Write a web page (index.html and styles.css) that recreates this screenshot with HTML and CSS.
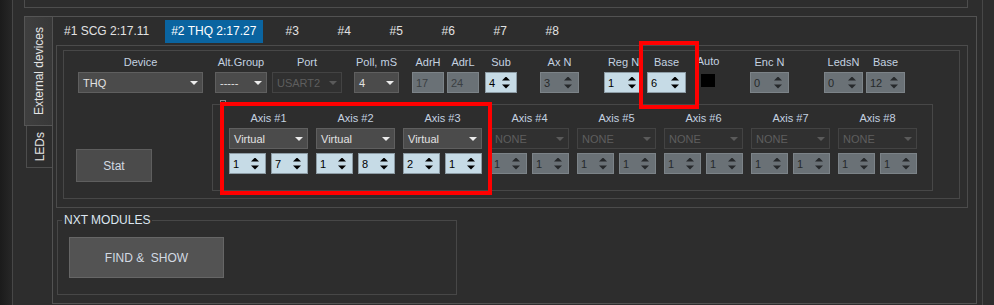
FILE: index.html
```html
<!DOCTYPE html>
<html lang="en">
<head>
    <meta charset="UTF-8">
    <title>External devices</title>
    <link rel="stylesheet" href="styles.css">
</head>
<body>
    <div class="frame">
        <div class="edge"></div>
        <div class="main">
            <div class="prev-box"></div>

            <div class="side-tabs">
                <div class="vtabs">
                    <div class="vtab active"><span>External devices</span></div>
                    <div class="vtab leds"><span>LEDs</span></div>
                </div>

                <div class="pane">
                    <div class="htabs">
                        <div class="htab first">#1 SCG 2:17.11</div>
                        <div class="htab active">#2 THQ 2:17.27</div>
                        <div class="htab num">#3</div>
                        <div class="htab num">#4</div>
                        <div class="htab num">#5</div>
                        <div class="htab num">#6</div>
                        <div class="htab num">#7</div>
                        <div class="htab num">#8</div>
                    </div>

                    <div class="inner-pane">
                        <div class="group">
                            <!-- ligne du module -->
                            <div class="dev-row">
                                <div class="col c-device">
                                    <label>Device</label>
                                    <div class="combo">THQ</div>
                                </div>
                                <div class="col c-alt">
                                    <label>Alt.Group</label>
                                    <div class="combo">-----</div>
                                </div>
                                <div class="col c-port">
                                    <label>Port</label>
                                    <div class="combo off">USART2</div>
                                </div>
                                <div class="col c-poll">
                                    <label>Poll, mS</label>
                                    <div class="combo">4</div>
                                </div>
                                <div class="col c-adrh">
                                    <label>AdrH</label>
                                    <div class="box">17</div>
                                </div>
                                <div class="col c-adrl">
                                    <label>AdrL</label>
                                    <div class="box">24</div>
                                </div>
                                <div class="col c-sub">
                                    <label>Sub</label>
                                    <div class="spin">4</div>
                                </div>
                                <div class="col c-axn">
                                    <label>Ax N</label>
                                    <div class="spin off">3</div>
                                </div>
                                <div class="col c-regn">
                                    <label>Reg N</label>
                                    <div class="spin">1</div>
                                </div>
                                <div class="col c-base">
                                    <label>Base</label>
                                    <div class="spin">6</div>
                                </div>
                                <div class="col c-auto">
                                    <label class="auto-label">Auto</label>
                                    <div class="check"></div>
                                </div>
                                <div class="col c-enc">
                                    <label>Enc N</label>
                                    <div class="spin off">0</div>
                                </div>
                                <div class="col c-leds">
                                    <label>LedsN</label>
                                    <div class="spin off">0</div>
                                </div>
                                <div class="col c-base2">
                                    <label>Base</label>
                                    <div class="spin off">12</div>
                                </div>
                            </div>

                            <div class="lower-row">
                                <button class="btn stat">Stat</button>

                                <div class="axis-group">
                                    <span class="axis-check"></span>
                                    <div class="axis-col">
                                        <label>Axis #1</label>
                                        <div class="combo">Virtual</div>
                                        <div class="spins"><div class="spin">1</div><div class="spin">7</div></div>
                                    </div>
                                    <div class="axis-col">
                                        <label>Axis #2</label>
                                        <div class="combo">Virtual</div>
                                        <div class="spins"><div class="spin">1</div><div class="spin">8</div></div>
                                    </div>
                                    <div class="axis-col">
                                        <label>Axis #3</label>
                                        <div class="combo">Virtual</div>
                                        <div class="spins"><div class="spin">2</div><div class="spin">1</div></div>
                                    </div>
                                    <div class="axis-col">
                                        <label>Axis #4</label>
                                        <div class="combo off">NONE</div>
                                        <div class="spins"><div class="spin off">1</div><div class="spin off">1</div></div>
                                    </div>
                                    <div class="axis-col">
                                        <label>Axis #5</label>
                                        <div class="combo off">NONE</div>
                                        <div class="spins"><div class="spin off">1</div><div class="spin off">1</div></div>
                                    </div>
                                    <div class="axis-col">
                                        <label>Axis #6</label>
                                        <div class="combo off">NONE</div>
                                        <div class="spins"><div class="spin off">1</div><div class="spin off">1</div></div>
                                    </div>
                                    <div class="axis-col">
                                        <label>Axis #7</label>
                                        <div class="combo off">NONE</div>
                                        <div class="spins"><div class="spin off">1</div><div class="spin off">1</div></div>
                                    </div>
                                    <div class="axis-col">
                                        <label>Axis #8</label>
                                        <div class="combo off">NONE</div>
                                        <div class="spins"><div class="spin off">1</div><div class="spin off">1</div></div>
                                    </div>
                                </div>
                            </div>
                        </div>
                    </div>

                    <div class="nxt">
                        <span class="nxt-title">NXT MODULES</span>
                        <button class="btn find">FIND &amp;&nbsp; SHOW</button>
                    </div>
                </div>
            </div>
        </div>
        <div class="edge-right"></div>
    </div>

    <!-- cadres rouges d'annotation -->
    <div class="mark mark-axes"></div>
    <div class="mark mark-base"></div>
</body>
</html>
```

FILE: styles.css
```css
* {
    box-sizing: border-box;
}
body {
    margin: 0;
    width: 994px;
    height: 305px;
    overflow: hidden;
    position: relative;
    background: #2d2d2d;
    font-family: "Liberation Sans", Arial, sans-serif;
    color: #c4d2e0;
}
.frame {
    display: flex;
    height: 305px;
}
.edge {
    width: 12px;
    background: linear-gradient(to right, #1b1b1b, #272727);
}
.main {
    width: 971px;
    border-left: 1px solid #474747;
    border-right: 1px solid #474747;
    padding-left: 11px;
}
.edge-right {
    flex: 1;
}
.prev-box {
    width: 944px;
    height: 8px;
    border: 1px solid #4d4d4d;
    border-top: none;
}

/* onglets verticaux */
.side-tabs {
    display: flex;
    margin-top: 8px;
}
.vtabs {
    width: 28px;
    display: flex;
    flex-direction: column;
}
.vtab {
    display: flex;
    align-items: center;
    justify-content: center;
    font-size: 12px;
    color: #e4e4e4;
}
.vtab span {
    writing-mode: vertical-rl;
    transform: rotate(180deg);
    white-space: nowrap;
}
.vtab.active {
    height: 110px;
    background: linear-gradient(to right, #3f3f3f, #383838);
    border: 1px solid #555;
    border-right: none;
}
.vtab.leds {
    height: 42px;
    width: 26px;
    margin-left: 2px;
    border: 1px solid #4d4d4d;
    border-top: none;
    border-right: none;
    padding-left: 1px;
}

.pane {
    width: 925px;
    height: 288px;
    border: 1px solid #525252;
    padding-top: 3px;
}

/* onglets horizontaux */
.htabs {
    display: flex;
    height: 25px;
    margin-left: 5px;
    align-items: flex-start;
}
.htab {
    height: 23px;
    line-height: 23px;
    padding: 0 6px;
    font-size: 12px;
    color: #e2e2e2;
    white-space: nowrap;
}
.htab.first {
    margin-right: 10px;
}
.htab.active {
    width: 98px;
    background: #0a64a0;
    color: #fff;
    margin-right: 3px;
}
.htab.num {
    width: 52px;
    padding: 0;
    text-align: center;
}

.inner-pane {
    width: 912px;
    height: 163px;
    margin-left: 3px;
    border: 1px solid #4b4b4b;
}
.group {
    width: 897px;
    height: 149px;
    margin: 4px 0 0 6px;
    border: 1px solid #474747;
    padding: 4px 0 0 14px;
}

/* ligne du module */
.dev-row {
    display: flex;
    align-items: flex-start;
}
.col {
    display: flex;
    flex-direction: column;
    align-items: center;
}
label {
    font-size: 11px;
    line-height: 14px;
    height: 14px;
    margin-bottom: 3px;
    white-space: nowrap;
}
.auto-label {
    margin-top: -1px;
    margin-bottom: 4px;
}
.c-device { width: 125px; }
.c-alt { width: 52px; margin-left: 12px; }
.c-port { width: 70px; margin-left: 5px; }
.c-poll { width: 45px; margin-left: 12px; }
.c-adrh { width: 32px; margin-left: 13px; }
.c-adrl { width: 32px; margin-left: 3px; }
.c-sub { width: 32px; margin-left: 6px; }
.c-axn { width: 39px; margin-left: 23px; }
.c-regn { width: 39px; margin-left: 25px; }
.c-base { width: 39px; margin-left: 4px; }
.c-auto { width: 14px; margin-left: 15px; }
.c-enc { width: 39px; margin-left: 35px; }
.c-leds { width: 39px; margin-left: 35px; }
.c-base2 { width: 39px; margin-left: 3px; }

/* champs */
.combo, .spin, .box {
    width: 100%;
    height: 21px;
    font-size: 11px;
    display: flex;
    align-items: center;
    justify-content: space-between;
}
.combo {
    background: #4b4b4b;
    border: 1px solid #5f5f5f;
    color: #e2e2e2;
    padding: 0 4px 0 4px;
}
.combo::after {
    content: "";
    border-left: 4px solid transparent;
    border-right: 4px solid transparent;
    border-top: 4px solid #ececec;
}
.combo.off {
    background: #303030;
    border-color: #434343;
    color: #5e5e5e;
}
.combo.off::after {
    border-top-color: #5a5a5a;
}
.spin {
    background: #c6dbe6;
    border: 1px solid #8d9ca5;
    color: #000;
    padding: 0 6px 0 3px;
}
/* fleches haut / bas du spinbox */
.spin::after {
    content: "";
    width: 8px;
    height: 12px;
    background: currentColor;
    clip-path: polygon(50% 0, 100% 4px, 50% 4px, 50% 8px, 100% 8px, 50% 100%, 0 8px, 50% 8px, 50% 4px, 0 4px);
}
.spin.off {
    background: #6a7176;
    border-color: #7c8388;
    color: #26292b;
}
.box {
    background: #6a7176;
    border: 1px solid #7c8388;
    color: #3a3f43;
    padding-left: 3px;
}
.check {
    width: 14px;
    height: 13px;
    margin-top: 2px;
    background: #000;
}

/* partie basse */
.lower-row {
    display: flex;
    align-items: flex-start;
    margin-top: 11px;
    margin-left: -2px;
}
.btn {
    font-family: "Liberation Sans", Arial, sans-serif;
    font-size: 12px;
    color: #d2dae2;
    background: #4b4b4b;
    border: 1px solid #5e5e5e;
    padding: 0;
}
.stat {
    width: 76px;
    height: 33px;
    margin-top: 45px;
}
.axis-group {
    position: relative;
    display: flex;
    gap: 8px;
    width: 721px;
    height: 87px;
    margin-left: 60px;
    border: 1px solid #474747;
    padding: 6px 15px 0 16px;
}
.axis-check {
    position: absolute;
    left: 7px;
    top: -5px;
    width: 6px;
    height: 6px;
    border: 1px solid #8a8a8a;
    background: #2d2d2d;
}
.axis-col {
    width: 79px;
    display: flex;
    flex-direction: column;
    align-items: center;
}
.axis-col .spins {
    width: 100%;
    display: flex;
    gap: 5px;
    margin-top: 4px;
}

/* NXT MODULES */
.nxt {
    position: relative;
    width: 400px;
    height: 75px;
    margin: 12px 0 0 4px;
    border: 1px solid #474747;
    padding: 16px 0 0 11px;
}
.nxt-title {
    position: absolute;
    left: 4px;
    top: -8px;
    padding: 0 2px;
    background: #2d2d2d;
    font-size: 12px;
    line-height: 14px;
    color: #dce6f0;
}
.find {
    width: 155px;
    height: 41px;
    background: #535353;
    border-color: #666;
}

/* annotations */
.mark {
    position: absolute;
    border: 4px solid #ff0000;
}
.mark-axes {
    left: 220px;
    top: 102px;
    width: 272px;
    height: 93px;
}
.mark-base {
    left: 639px;
    top: 41px;
    width: 60px;
    height: 68px;
}
```
